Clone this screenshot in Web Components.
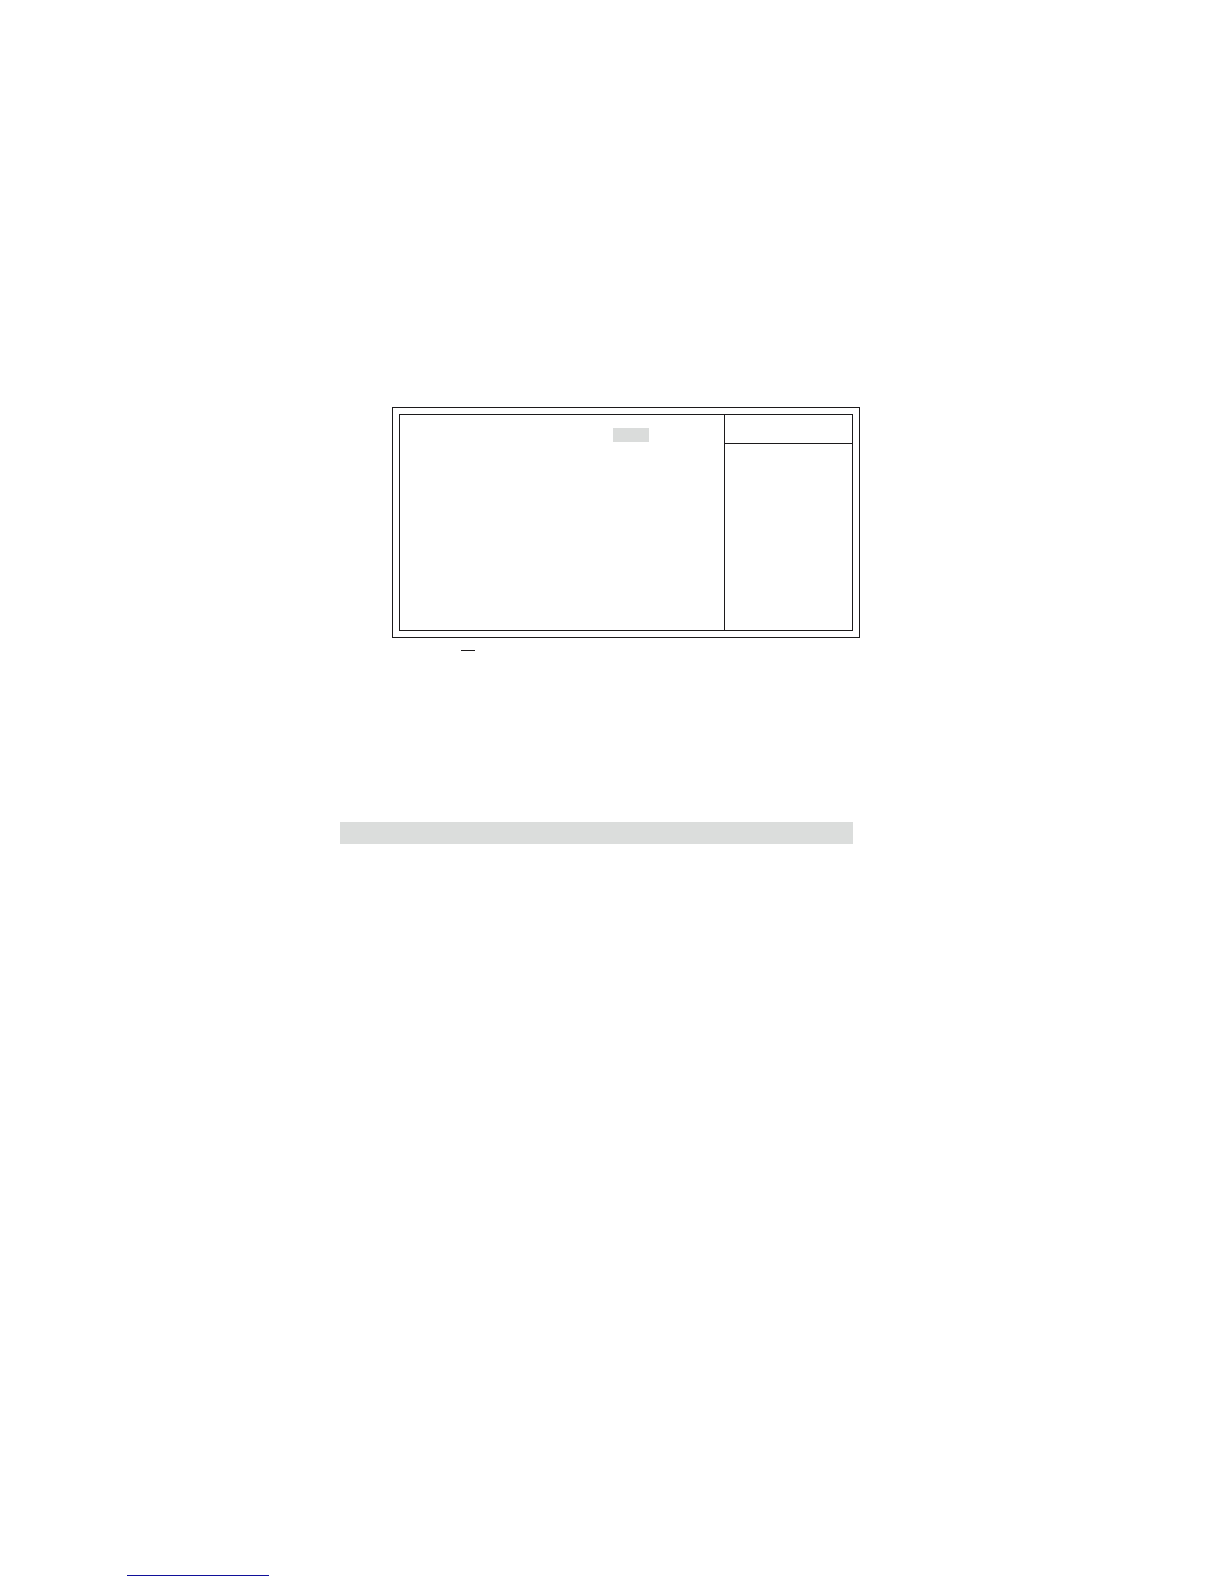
<!DOCTYPE html>
<html lang="en">
<head>
<meta charset="utf-8">
<meta name="viewport" content="width=device-width, initial-scale=1">
<title>Setup page</title>
<style>
  body {
    margin: 0;
    background: #fff;
    font-family: "Liberation Sans", sans-serif;
  }

  .link-rule {
    --rule-color: #10109a;
  }
</style>
</head>
<body>
<manual-page>
  <setup-frame slot="figure">
    <value-mark></value-mark>
  </setup-frame>
  <line-rule slot="note"></line-rule>
  <section-bar slot="section"></section-bar>
  <line-rule slot="footer" class="link-rule"></line-rule>
</manual-page>

<script>
class ManualPage extends HTMLElement {
  constructor() {
    super();
    this.attachShadow({ mode: "open" });
    this.shadowRoot.innerHTML = `
      <style>
        :host {
          display: flex;
          flex-direction: column;
          box-sizing: border-box;
          min-height: 100vh;
          padding: 407px 0 8px;
        }

        .row {
          display: grid;
        }

        .figure {
          grid-template-columns: 392fr 468fr 364fr;
        }

        .note {
          grid-template-columns: 461fr 14fr 749fr;
          margin-top: 12px;
        }

        .section {
          grid-template-columns: 340fr 513fr 371fr;
          margin-top: 171px;
        }

        .footer {
          grid-template-columns: 127fr 142fr 955fr;
          margin-top: auto;
        }

        ::slotted(*) {
          grid-column: 2;
        }
      </style>
      <main>
        <div class="row figure"><slot name="figure"></slot></div>
        <div class="row note"><slot name="note"></slot></div>
        <div class="row section"><slot name="section"></slot></div>
      </main>
      <footer class="row footer"><slot name="footer"></slot></footer>
    `;
  }
}

// Double-ruled box: settings on the left, help column on the right
class SetupFrame extends HTMLElement {
  constructor() {
    super();
    this.attachShadow({ mode: "open" });
    this.shadowRoot.innerHTML = `
      <style>
        :host {
          display: block;
          padding: 6px;
          border: 1px solid #1c1a1b;
        }

        .inner {
          display: grid;
          grid-template-columns: 324fr 128fr;
          min-height: 215px;
          border: 1px solid #1c1a1b;
        }

        .settings {
          display: grid;
          grid-template-columns: 213fr 36fr 75fr;
          align-content: start;
          padding-top: 13px;
        }

        .help {
          border-left: 1px solid #1c1a1b;
        }

        .help-header {
          height: 28px;
          border-bottom: 1px solid #1c1a1b;
        }

        ::slotted(*) {
          grid-column: 2;
        }
      </style>
      <div class="inner">
        <div class="settings"><slot></slot></div>
        <div class="help"><div class="help-header"></div></div>
      </div>
    `;
  }
}

class ValueMark extends HTMLElement {
  constructor() {
    super();
    this.attachShadow({ mode: "open" });
    this.shadowRoot.innerHTML = `
      <style>
        :host {
          display: block;
          height: 14px;
          background: #dadcdb;
        }
      </style>
    `;
  }
}

class SectionBar extends HTMLElement {
  constructor() {
    super();
    this.attachShadow({ mode: "open" });
    this.shadowRoot.innerHTML = `
      <style>
        :host {
          display: block;
          height: 22px;
          background: #dbdddc;
        }
      </style>
    `;
  }
}

class LineRule extends HTMLElement {
  constructor() {
    super();
    this.attachShadow({ mode: "open" });
    this.shadowRoot.innerHTML = `
      <style>
        :host {
          display: block;
          height: 1px;
          background: var(--rule-color, #1c1a1b);
        }
      </style>
    `;
  }
}

customElements.define("manual-page", ManualPage);
customElements.define("setup-frame", SetupFrame);
customElements.define("value-mark", ValueMark);
customElements.define("section-bar", SectionBar);
customElements.define("line-rule", LineRule);
</script>
</body>
</html>
